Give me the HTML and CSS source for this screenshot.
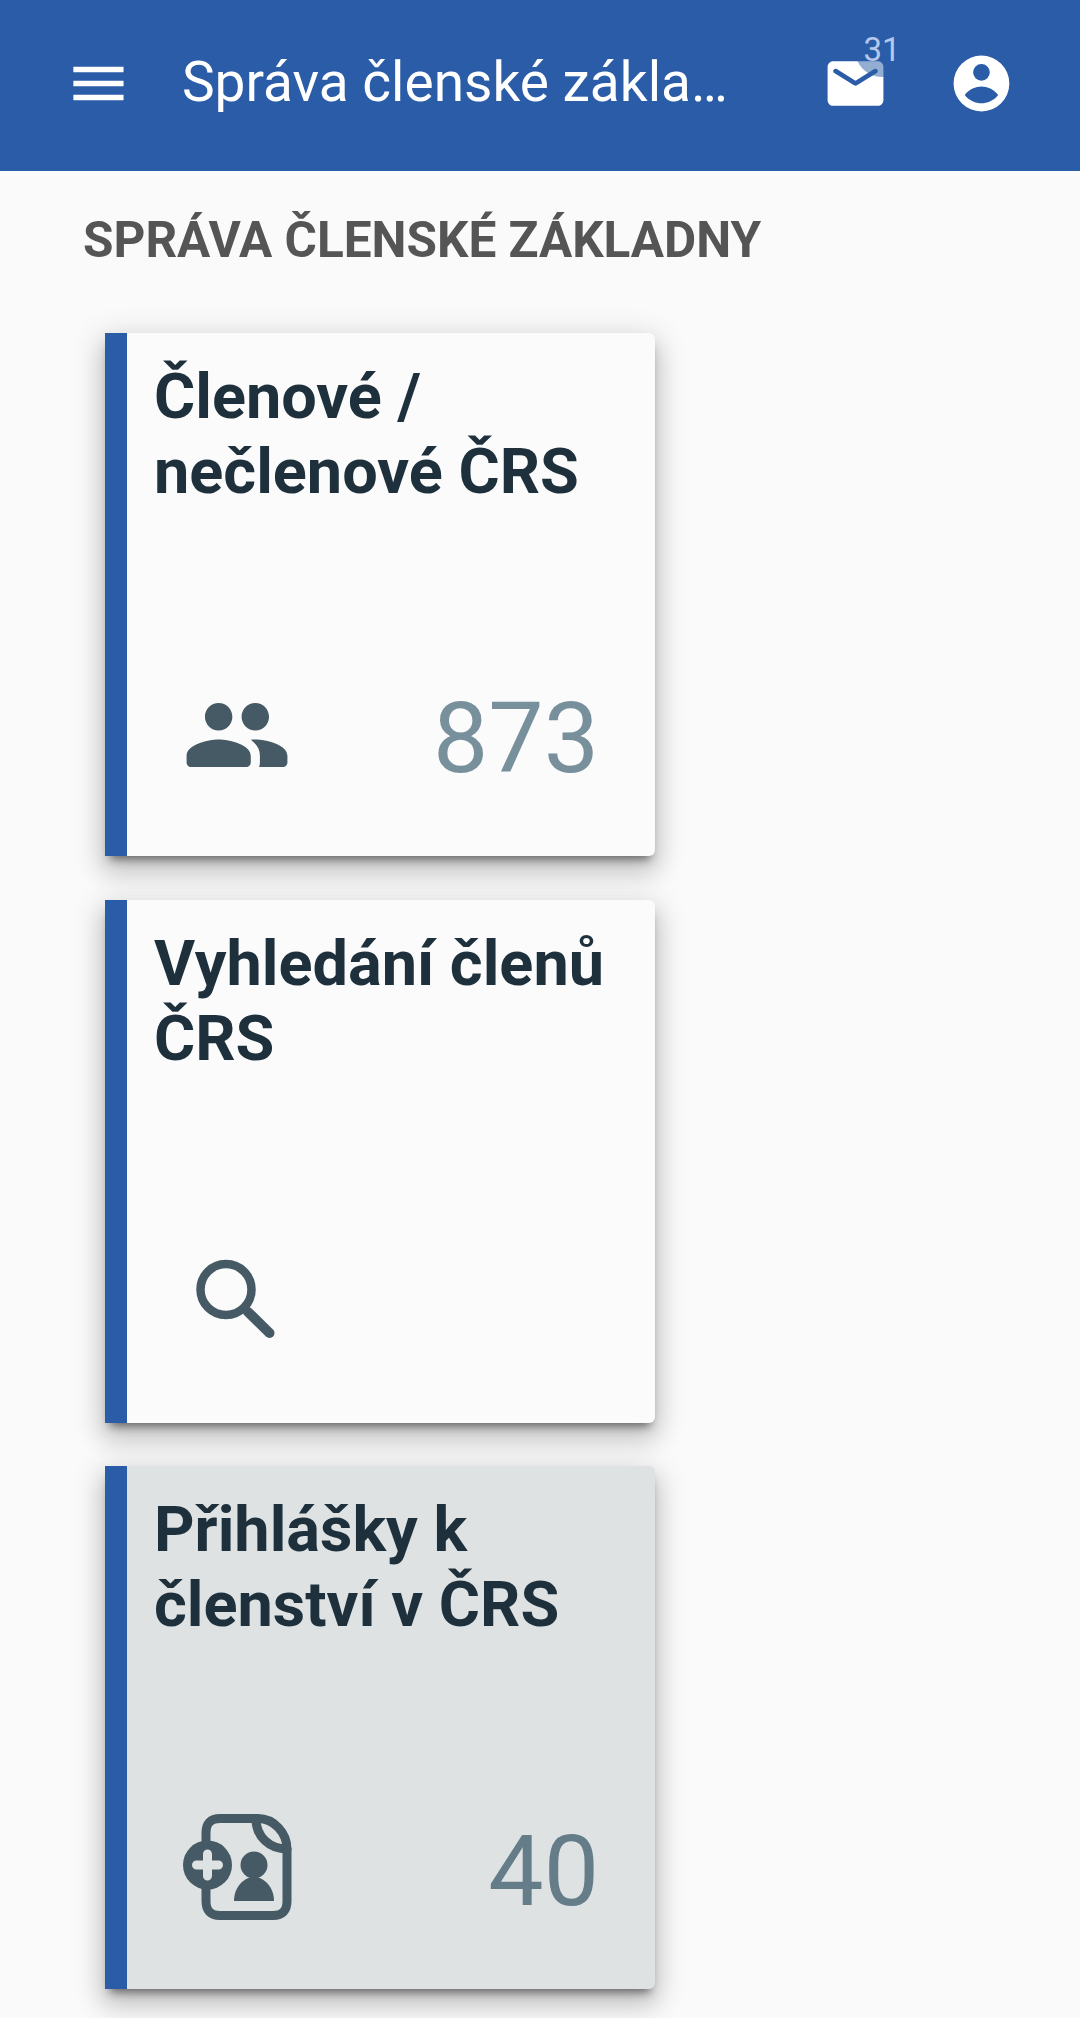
FILE: index.html

```html
<!DOCTYPE html>
<html lang="cs">
<head>
    <meta charset="UTF-8">
    <meta name="viewport" content="width=device-width, initial-scale=1.0">
    <title>Správa členské základny</title>
    <link rel="stylesheet" href="styles.css">
</head>
<body>
    <header class="topbar">
        <svg class="topbar-icon" viewBox="0 0 24 24"><path d="M3 18h18v-2H3v2zm0-5h18v-2H3v2zm0-7v2h18V6H3z"/></svg>
        <div class="topbar-title">Správa členské základny</div>
        <div class="mail">
            <svg class="topbar-icon" viewBox="0 0 24 24"><path d="M20 4H4c-1.100 0-1.990.9-1.990 2L2 18c0 1.100.9 2 2 2h16c1.100 0 2-.9 2-2V6c0-1.100-.9-2-2-2zm-.4 4.250l-7.070 4.420c-.32.2-.74.2-1.060 0L4.400 8.250c-.25-.16-.4-.43-.4-.72 0-.67.73-1.070 1.300-.72L12 11l6.700-4.190c.57-.35 1.300.05 1.300.72 0 .29-.15.56-.4.72z"/></svg>
            <span class="mail-badge">31</span>
        </div>
        <svg class="topbar-icon" viewBox="0 0 24 24"><path fill-rule="evenodd" d="M12 2a10 10 0 1 0 0 20a10 10 0 1 0 0-20zM12 5a3 3 0 1 0 0 6a3 3 0 1 0 0-6zM6 16.100c1.500-2 4-3 6-3s4.500 1 6 3c-1.500 2-4 3-6 3s-4.500-1-6-3z"/></svg>
    </header>

    <main class="content">
        <h2 class="section-title">SPRÁVA ČLENSKÉ ZÁKLADNY</h2>

        <div class="card">
            <h3 class="card-title">Členové / nečlenové ČRS</h3>
            <div class="card-row">
                <svg class="card-icon" viewBox="0 0 24 24"><path d="M16 11c1.660 0 2.990-1.340 2.990-3S17.660 5 16 5s-3 1.340-3 3 1.340 3 3 3zm-8 0c1.660 0 2.990-1.340 2.990-3S9.660 5 8 5 5 6.340 5 8s1.340 3 3 3zm0 2c-2.330 0-7 1.170-7 3.500V18c0 .55.45 1 1 1h12c.55 0 1-.45 1-1v-1.500C15 14.170 10.330 13 8 13zm8 0c-.29 0-.62.02-.97.05.02.01.03.03.04.04 1.140.83 1.930 1.940 1.930 3.410V18c0 .35-.07.69-.18 1H22c.55 0 1-.45 1-1v-1.500c0-2.330-4.670-3.500-7-3.500z"/></svg>
                <span class="card-count">873</span>
            </div>
        </div>

        <div class="card">
            <h3 class="card-title">Vyhledání členů ČRS</h3>
            <div class="card-row">
                <svg class="card-icon" viewBox="0 0 110 110">
                    <circle class="line" cx="44" cy="42.500" r="25.500"/>
                    <path class="line handle" d="M66 65L87.500 86"/>
                </svg>
            </div>
        </div>

        <div class="card card-active">
            <h3 class="card-title">Přihlášky k členství v ČRS</h3>
            <div class="card-row">
                <svg class="card-icon" viewBox="0 0 110 110">
                    <path class="line doc" d="M24 40V20Q24 5.500 38 5.500H76C92 5.500 105 20 105 36V88Q105 102.500 91 102.500H38Q24 102.500 24 88V60"/>
                    <path class="line doc" d="M74 6C74 24 88 36 105 36"/>
                    <circle cx="25.500" cy="52" r="24.500"/>
                    <path class="plus" d="M25.500 41V63M14.500 52H36.500"/>
                    <circle cx="72" cy="52" r="13.500"/>
                    <path d="M52 88C52 74 62 64 72 64C82 64 92 74 92 88Z"/>
                </svg>
                <span class="card-count">40</span>
            </div>
        </div>
    </main>
</body>
</html>
```

FILE: styles.css

```css
body {
    margin: 0;
    padding: 0;
    background-color: #fafafa;
    font-family: Roboto, "Liberation Sans", sans-serif;
}
.topbar {
    display: flex;
    align-items: center;
    box-sizing: border-box;
    height: 171px;
    padding: 0 65px 5px;
    background-color: #2a5ca8;
    color: white;
}
.topbar-icon {
    display: block;
    width: 67px;
    height: 67px;
    fill: white;
}
.topbar-title {
    width: 553px;
    margin-left: 50px;
    margin-right: 88px;
    margin-bottom: 3px;
    overflow: hidden;
    font-size: 55px;
    line-height: 66px;
    white-space: nowrap;
    text-overflow: ellipsis;
}
.mail {
    position: relative;
    margin-right: 59px;
}
.mail-badge {
    position: absolute;
    top: -27px;
    left: 33px;
    width: 54px;
    height: 54px;
    border-radius: 50%;
    background-color: rgba(42, 92, 168, 0.5);
    color: #b4c8ea;
    font-size: 33px;
    line-height: 54px;
    text-align: center;
}
.content {
    padding: 0 0 0 105px;
}
.section-title {
    margin: 0 0 0 -22px;
    padding: 41px 0 65px;
    color: #555;
    font-size: 49.500px;
    font-weight: 700;
    line-height: 56px;
}
.card {
    display: flex;
    flex-direction: column;
    justify-content: space-between;
    box-sizing: border-box;
    width: 550px;
    height: 523px;
    margin-bottom: 43.500px;
    padding: 26px 30px 66px 27px;
    border-left: 22px solid #2a5ca8;
    border-radius: 0 6px 6px 0;
    background-color: #fbfbfb;
    box-shadow: 0 8px 10px -5px rgba(0, 0, 0, 0.5), 0 16px 24px 2px rgba(0, 0, 0, 0.14), 0 6px 30px 5px rgba(0, 0, 0, 0.12);
}
.card-active {
    background-color: #dee2e3;
}
.card-title {
    margin: 0;
    color: #1d303c;
    font-size: 63px;
    font-weight: 700;
    line-height: 75px;
}
.card-row {
    display: flex;
    align-items: center;
    justify-content: space-between;
    height: 110px;
    padding: 0 26px 0 28px;
}
.card-icon {
    display: block;
    width: 110px;
    height: 110px;
    fill: #455a64;
}
.card-icon .line {
    fill: none;
    stroke: #455a64;
    stroke-width: 8.500;
    stroke-linecap: round;
}
.card-icon .handle {
    stroke-width: 10;
}
.card-icon .doc {
    stroke-width: 9;
}
.card-icon .plus {
    fill: none;
    stroke: #dee2e3;
    stroke-width: 9;
    stroke-linecap: round;
}
.card-count {
    margin-top: 8px;
    color: #78909c;
    font-size: 98.500px;
    font-weight: 400;
    line-height: 110px;
}
.card-active .card-count {
    color: #647d89;
}
```
